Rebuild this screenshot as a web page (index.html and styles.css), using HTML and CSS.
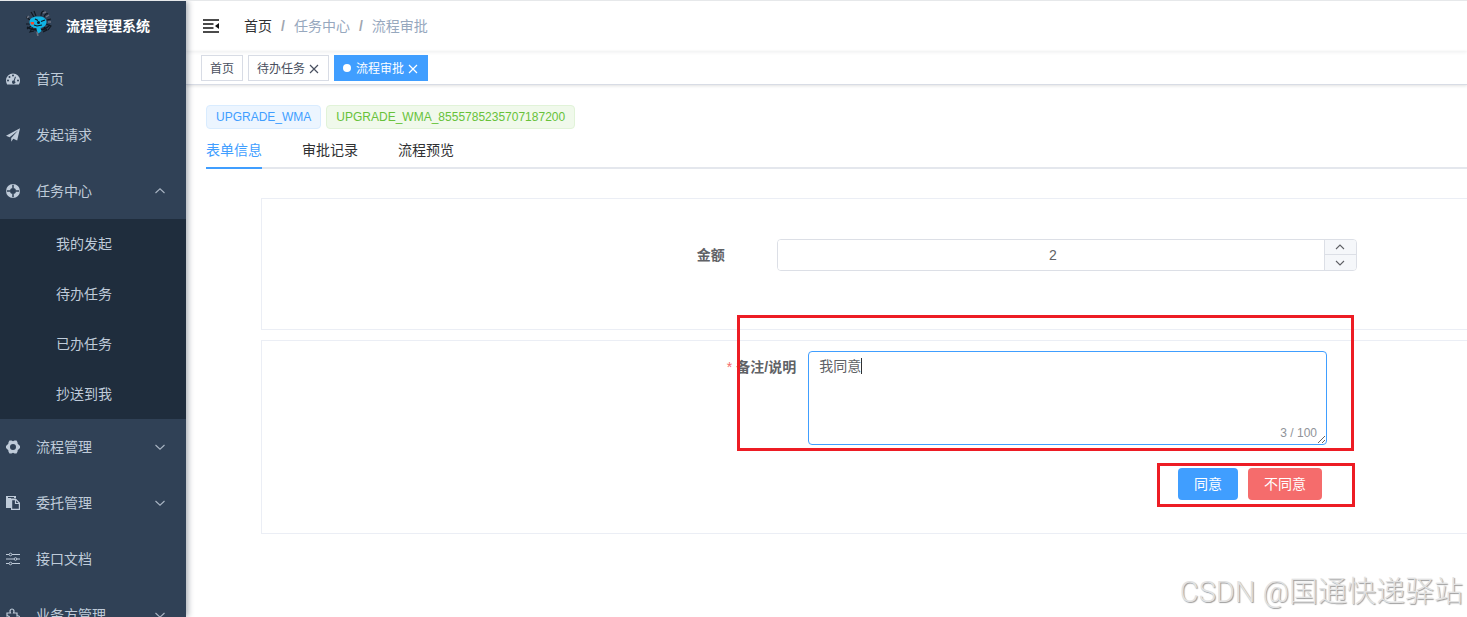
FILE: index.html
```html
<!DOCTYPE html>
<html lang="zh-CN">
<head>
<meta charset="utf-8">
<title>流程管理系统</title>
<link rel="stylesheet" href="styles.css">
</head>
<body>
<div class="app">
  <aside class="sidebar">
    <div class="brand">
      <svg class="brand-logo" viewBox="0 0 26 26" aria-hidden="true">
        <g fill="none" stroke="#111820" stroke-width="1.1">
          <path d="M8 7 5 2M10 6 8 1M15 6c0-3 1-5 3-5M18 7c1-3 3-4 4-3M4 10 0 7M4 14H0M5 16l-4 3M7 17l-3 5 4-1M20 14l5 2-3 4M18 17l3 3-4 2M21 10l4-1"/>
          <path d="M1 17c6 4 16 5 23-2M6 19h4M15 20h5"/>
        </g>
        <path d="M17 3l3-1M20 7l3-2M22 12h3M11 22l1 4M3 6 1 8" stroke="#6d7280" stroke-width="1.500" fill="none"/>
        <path d="M3.500 12c0-4 4-5.500 9-5.500s8 2 8 5.500-3 5.500-6 6l1 3-3 2.500-1.500-2.500-.5-3c-4 0-7-2-7-6z" fill="#10b4e4"/>
        <path d="M9 9l3 1.500M15 11.500l4-1.500M8 15l3 1 5-1" stroke="#101820" stroke-width="1.200" fill="none"/>
        <circle cx="12.500" cy="12.500" r="1.500" fill="#101820"/>
        <path d="M4.500 12h3.500v2.500H5z" fill="#ef4b2e"/>
      </svg>
      <h1 class="brand-name">流程管理系统</h1>
    </div>
    <nav class="menu">
      <a class="menu-item" href="#">
        <svg class="menu-icon" viewBox="0 0 14 14"><path fill="currentColor" fill-rule="evenodd" d="M7 1.400a7 7 0 0 0-7 7c0 1.500.4 2.800 1.100 4h11.800a7 7 0 0 0 1.100-4 7 7 0 0 0-7-7zM7 2.600a1 1 0 1 1 0 2 1 1 0 0 1 0-2zM3.500 4a1 1 0 1 1 0 2 1 1 0 0 1 0-2zM2 7.500a1 1 0 1 1 0 2 1 1 0 0 1 0-2zM12 7.500a1 1 0 1 1 0 2 1 1 0 0 1 0-2zM9 4.600l.9.3-1.300 4a1.600 1.600 0 1 1-.9-.3z"/></svg>
        <span class="menu-text">首页</span>
      </a>
      <a class="menu-item" href="#">
        <svg class="menu-icon" viewBox="0 0 14 14"><path fill="currentColor" d="M14 .2 0 7.800l3.600 1.400L12 2.600 5.200 10v3.800l2.100-3 3.900 1.600z"/></svg>
        <span class="menu-text">发起请求</span>
      </a>
      <a class="menu-item" href="#">
        <svg class="menu-icon" viewBox="0 0 14 14"><circle cx="7" cy="7" r="5" fill="none" stroke="currentColor" stroke-width="4"/><path d="M7 .8v3.200M7 10v3.200M.8 7h3.200M10 7h3.200" stroke="#304156" stroke-width="1.500"/></svg>
        <span class="menu-text">任务中心</span>
        <svg class="menu-arrow" viewBox="0 0 12 12"><path d="M1.500 8 6 3.800 10.500 8"/></svg>
      </a>
      <div class="submenu">
        <a class="submenu-item" href="#">我的发起</a>
        <a class="submenu-item" href="#">待办任务</a>
        <a class="submenu-item" href="#">已办任务</a>
        <a class="submenu-item" href="#">抄送到我</a>
      </div>
      <a class="menu-item" href="#">
        <svg class="menu-icon" viewBox="0 0 14 14"><path fill="currentColor" fill-rule="evenodd" d="M3.500.5h2L7 1.200 8.500.5h2l1 1.800.2 1.500L14 6v2l-2.300 2.200-.2 1.500-1 1.800h-2L7 12.800l-1.500.7h-2l-1-1.800-.2-1.500L0 8V6l2.300-2.200.2-1.500zM7 4a3 3 0 1 0 0 6 3 3 0 0 0 0-6z"/></svg>
        <span class="menu-text">流程管理</span>
        <svg class="menu-arrow" viewBox="0 0 12 12"><path d="M1.500 4 6 8.200 10.500 4"/></svg>
      </a>
      <a class="menu-item" href="#">
        <svg class="menu-icon" viewBox="0 0 14 14"><path fill="currentColor" fill-rule="evenodd" d="M0 0h10v2.500H5V12H0zM2 1v1h6V1z"/><path d="M5.600 3.600H10L13.400 7v6.400H5.600z" fill="#304156" stroke="currentColor" stroke-width="1.200"/><path d="M9.500 3.500V7.500h4" fill="none" stroke="currentColor" stroke-width="1.200"/></svg>
        <span class="menu-text">委托管理</span>
        <svg class="menu-arrow" viewBox="0 0 12 12"><path d="M1.500 4 6 8.200 10.500 4"/></svg>
      </a>
      <a class="menu-item" href="#">
        <svg class="menu-icon" viewBox="0 0 14 14" fill="none" stroke="currentColor"><path d="M0 2.500h3M6 2.500h8M0 7h8M11 7h3M0 11.500h3M6 11.500h8"/><circle cx="4.500" cy="2.500" r="1.300"/><circle cx="9.500" cy="7" r="1.300"/><circle cx="4.500" cy="11.500" r="1.300"/></svg>
        <span class="menu-text">接口文档</span>
      </a>
      <a class="menu-item" href="#">
        <svg class="menu-icon" viewBox="0 0 14 14" fill="none" stroke="currentColor" stroke-width="1.200"><path d="M1 5h3.500C3.500 3 4.200 1 6 1s2.500 2 1.500 4H11v3c2-.6 2.500.5 2.500 1.500S13 11.500 11 11v2.500H1V11c2 .3 2.500-.5 2.500-1.500S2.500 7.700 1 8z"/></svg>
        <span class="menu-text">业务方管理</span>
        <svg class="menu-arrow" viewBox="0 0 12 12"><path d="M1.500 4 6 8.200 10.500 4"/></svg>
      </a>
    </nav>
  </aside>

  <div class="main">
    <header class="navbar">
      <button class="hamburger" type="button" aria-label="收起菜单">
        <svg class="hamburger-icon" viewBox="0 0 16 14"><path d="M0 1h16M0 5h10.500M0 9h10.500M0 13h16" stroke="#111" stroke-width="1.600"/><path d="M16 4v6l-4-3z" fill="#111"/></svg>
      </button>
      <nav class="breadcrumb">
        <a class="crumb crumb-link" href="#">首页</a>
        <span class="crumb-sep">/</span>
        <span class="crumb">任务中心</span>
        <span class="crumb-sep">/</span>
        <span class="crumb">流程审批</span>
      </nav>
    </header>

    <div class="tags-view">
      <a class="view-tag" href="#">首页</a>
      <a class="view-tag" href="#">待办任务<svg class="tag-close" viewBox="0 0 10 10"><path d="M1 1l8 8M9 1 1 9"/></svg></a>
      <a class="view-tag view-tag-active" href="#"><span class="tag-dot"></span>流程审批<svg class="tag-close" viewBox="0 0 10 10"><path d="M1 1l8 8M9 1 1 9"/></svg></a>
    </div>

    <main class="content">
      <div class="labels">
        <span class="label label-primary">UPGRADE_WMA</span>
        <span class="label label-success">UPGRADE_WMA_8555785235707187200</span>
      </div>
      <div class="tabs" role="tablist">
        <button class="tab tab-active" type="button" role="tab" aria-selected="true">表单信息</button>
        <button class="tab" type="button" role="tab" aria-selected="false">审批记录</button>
        <button class="tab" type="button" role="tab" aria-selected="false">流程预览</button>
      </div>

      <form class="panels">
        <section class="panel panel-amount">
          <label class="field-label" for="amount">金额</label>
          <div class="stepper">
            <input class="stepper-input" id="amount" type="number" value="2">
            <div class="stepper-controls">
              <button class="stepper-btn" type="button" aria-label="增加"><svg class="stepper-icon" viewBox="0 0 10 10"><path d="M1 7l4-4 4 4"/></svg></button>
              <button class="stepper-btn" type="button" aria-label="减少"><svg class="stepper-icon" viewBox="0 0 10 10"><path d="M1 3l4 4 4-4"/></svg></button>
            </div>
          </div>
        </section>

        <section class="panel panel-remark">
          <div class="remark-row">
            <label class="field-label" for="remark"><span class="required">*</span>备注/说明</label>
            <div class="remark-box">
              <textarea class="remark-input" id="remark" maxlength="100">我同意</textarea>
              <span class="caret"></span>
              <span class="counter">3 / 100</span>
            </div>
          </div>
          <div class="actions">
            <button class="btn btn-primary" type="button">同意</button>
            <button class="btn btn-danger" type="button">不同意</button>
          </div>
          <div class="mark mark-remark"></div>
          <div class="mark mark-actions"></div>
        </section>
      </form>
    </main>
  </div>
  <div class="watermark">CSDN @国通快递驿站</div>
</div>
</body>
</html>
```
FILE: styles.css
```css
* { box-sizing: border-box; }

body {
  margin: 0;
  background: #fff;
  color: #303133;
  font-family: "Liberation Sans", "Noto Sans CJK SC", sans-serif;
  font-size: 14px;
}

a { color: inherit; text-decoration: none; }
button, input, textarea { font-family: inherit; font-size: 14px; }

.app {
  position: relative;
  display: flex;
  height: 100vh;
  overflow: hidden;
  border-top: 1px solid #e6e8ea;
}

/* Sidebar */
.sidebar {
  flex: 0 0 186px;
  z-index: 2;
  overflow: hidden;
  background: #304156;
  color: #bfcbd9;
  box-shadow: 2px 0 6px rgba(0, 21, 41, .35);
}
.brand {
  display: flex;
  align-items: center;
  gap: 14px;
  height: 50px;
  padding-left: 26px;
}
.brand-logo { width: 26px; height: 26px; margin-bottom: 6px; }
.brand-name { margin: 0; color: #fff; font-size: 14px; font-weight: 700; line-height: 50px; }
.menu-item {
  display: flex;
  align-items: center;
  height: 56px;
  padding: 0 20px 0 6px;
  line-height: 56px;
}
.menu-icon { width: 14px; height: 14px; margin-right: 16px; }
.menu-text { flex: 1; }
.menu-arrow { width: 12px; height: 12px; }
.menu-arrow path { fill: none; stroke: #a9b5c3; stroke-width: 1.1; }
.submenu { background: #1f2d3d; }
.submenu-item { display: block; padding-left: 56px; line-height: 50px; }

/* Top bars */
.main { flex: 1; min-width: 0; }
.navbar {
  display: flex;
  align-items: center;
  height: 50px;
  padding-left: 17px;
  line-height: 50px;
  box-shadow: 0 1px 4px rgba(0, 21, 41, .08);
}
.hamburger { display: flex; padding: 0; border: 0; background: none; }
.hamburger-icon { width: 16px; height: 14px; }
.breadcrumb { display: flex; align-items: baseline; gap: 9px; margin-left: 25px; color: #97a8be; }
.crumb-link { color: #303133; }
.crumb-sep { color: #a0a6b0; font-weight: 700; }
.tags-view {
  display: flex;
  align-items: center;
  gap: 5px;
  height: 34px;
  padding-left: 15px;
  border-bottom: 1px solid #d8dce5;
  box-shadow: 0 1px 3px rgba(0, 0, 0, .12);
}
.view-tag {
  display: flex;
  align-items: center;
  height: 26px;
  padding: 0 8px;
  border: 1px solid #d8dce5;
  color: #495060;
  font-size: 12px;
}
.view-tag-active { border-color: #409eff; background: #409eff; color: #fff; }
.tag-dot { width: 8px; height: 8px; margin-right: 5px; border-radius: 50%; background: #fff; }
.tag-close { width: 10px; height: 10px; margin: 2px 1px 0 4px; }
.tag-close path { fill: none; stroke: currentColor; stroke-width: 1.2; }

/* Content */
.content { padding: 20px 0 0 20px; }
.labels { display: flex; gap: 5px; }
.label {
  padding: 0 9px;
  border: 1px solid;
  border-radius: 4px;
  font-size: 12px;
  line-height: 22px;
}
.label-primary { border-color: #d9ecff; background: #ecf5ff; color: #409eff; }
.label-success { border-color: #e1f3d8; background: #f0f9eb; color: #67c23a; }
.tabs { display: flex; gap: 40px; height: 40px; box-shadow: inset 0 -2px #e4e7ed; }
.tab {
  padding: 2px 0 0;
  border: 0;
  border-bottom: 2px solid transparent;
  background: none;
  color: #303133;
}
.tab-active { border-color: #409eff; color: #409eff; }

/* Form panels */
.panels { display: grid; gap: 10px; margin: 29px 0 0 55px; }
.panel { border: 1px solid #ebeef5; border-right: 0; }
.field-label { color: #606266; font-weight: 700; line-height: 32px; text-align: right; }
.panel-amount {
  display: grid;
  grid-template-columns: 47fr 53fr;
  padding: 40px 110px 58px 0;
}
.panel-amount .field-label { padding-right: 52px; }
.stepper {
  display: flex;
  height: 32px;
  overflow: hidden;
  border: 1px solid #dcdfe6;
  border-radius: 4px;
}
.stepper-input {
  flex: 1;
  min-width: 0;
  padding: 0 0 0 4px;
  border: 0;
  outline: 0;
  color: #606266;
  text-align: center;
  appearance: textfield;
}
.stepper-input::-webkit-inner-spin-button { appearance: none; margin: 0; }
.stepper-controls {
  display: grid;
  grid-template-rows: 14px 1fr;
  width: 32px;
  border-left: 1px solid #dcdfe6;
}
.stepper-btn {
  display: flex;
  align-items: center;
  justify-content: center;
  padding: 0;
  border: 0;
  background: #f5f7fa;
}
.stepper-btn + .stepper-btn { border-top: 1px solid #dcdfe6; }
.stepper-icon { width: 10px; height: 10px; }
.stepper-icon path { fill: none; stroke: #606266; stroke-width: 1.1; }

.panel-remark { position: relative; padding: 10px 0 33px; }
.remark-row { display: grid; grid-template-columns: 20fr 19fr; padding-right: 140px; }
.remark-row .field-label { padding-right: 12px; }
.required { margin-right: 4px; color: #f56c6c; font-weight: 400; }
.remark-box { position: relative; display: flex; }
.remark-input {
  flex: 1;
  min-width: 0;
  height: 94px;
  padding: 4px 10px;
  border: 1px solid #409eff;
  border-radius: 4px;
  outline: 0;
  color: #606266;
  line-height: 20px;
  resize: vertical;
}
.caret { position: absolute; top: 7px; left: 53px; width: 1px; height: 16px; background: #303133; }
.counter { position: absolute; right: 10px; bottom: 5px; color: #909399; font-size: 12px; line-height: 14px; }
.actions { display: flex; justify-content: flex-end; gap: 10px; margin-top: 23px; padding-right: 145px; }
.btn { height: 32px; padding: 0 16px 2px; border: 0; border-radius: 4px; color: #fff; }
.btn-primary { background: #409eff; }
.btn-danger { background: #f56c6c; }

/* Highlight frames */
.mark { position: absolute; border: 3px solid #ed1c24; pointer-events: none; }
.mark-remark { top: -26px; right: 113px; left: 475px; height: 136px; }
.mark-actions { top: 122px; right: 112px; width: 198px; height: 44px; }

.watermark {
  position: absolute;
  right: 4px;
  bottom: 5px;
  color: #e2e2e2;
  font-family: Roboto, "Noto Sans CJK SC", sans-serif;
  font-size: 29px;
  font-weight: 300;
  line-height: 40px;
  text-shadow: 1px 1px 1px #999;
}
```
